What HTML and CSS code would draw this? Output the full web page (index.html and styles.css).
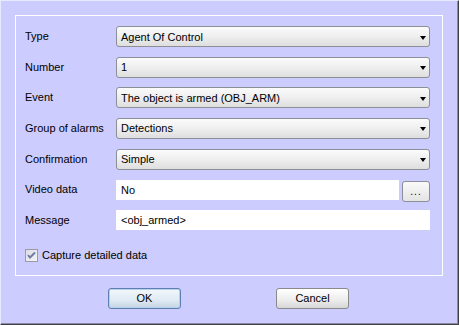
FILE: index.html
```html
<!DOCTYPE html>
<html>
<head>
<meta charset="utf-8">
<link rel="stylesheet" href="styles.css">
</head>
<body>
<div class="window">
  <div class="inner">
    <div class="group">
      <div class="form">
        <div class="label">Type</div>
        <div class="combo"><span>Agent Of Control</span><i class="arrow"></i></div>
        <div class="label">Number</div>
        <div class="combo"><span>1</span><i class="arrow"></i></div>
        <div class="label">Event</div>
        <div class="combo"><span>The object is armed (OBJ_ARM)</span><i class="arrow"></i></div>
        <div class="label">Group of alarms</div>
        <div class="combo"><span>Detections</span><i class="arrow"></i></div>
        <div class="label">Confirmation</div>
        <div class="combo"><span>Simple</span><i class="arrow"></i></div>
        <div class="label">Video data</div>
        <div class="video">
          <div class="field">No</div>
          <div class="dots">...</div>
        </div>
        <div class="label">Message</div>
        <div class="field">&lt;obj_armed&gt;</div>
      </div>
      <div class="check-row">
        <span class="checkbox">
          <svg width="13" height="13" viewBox="0 0 13 13"><path d="M3 6 L5 8.5 L10 3.5" fill="none" stroke="#6f7ca4" stroke-width="2"/></svg>
        </span>
        <span>Capture detailed data</span>
      </div>
    </div>
    <div class="buttons">
      <div class="btn ok">OK</div>
      <div class="btn">Cancel</div>
    </div>
  </div>
</div>
</body>
</html>
```
FILE: styles.css
```css
html, body {
  margin: 0;
  padding: 0;
}
body {
  width: 459px;
  height: 325px;
  overflow: hidden;
  font-family: "Liberation Sans", Arial, sans-serif;
  font-size: 11px;
  color: #000;
}
.window {
  width: 459px;
  height: 325px;
  box-sizing: border-box;
  background: #ccccff;
  border-top: 1px solid #e8e8ff;
  border-left: 1px solid #e8e8ff;
  border-right: 1px solid #404040;
  border-bottom: 1px solid #404040;
}
.inner {
  height: 100%;
  box-sizing: border-box;
  border-right: 1px solid #8a8aa8;
  border-bottom: 1px solid #8a8aa8;
  padding: 14px 14px 0 14px;
}
.group {
  border: 1px solid #ffffff;
  height: 261px;
  box-sizing: border-box;
  padding: 10px 12px 0 9px;
}
.form {
  display: grid;
  grid-template-columns: 91px 314px;
  grid-auto-rows: 21px;
  row-gap: 9.67px;
  align-items: center;
}
.label {
  line-height: 21px;
}
.combo {
  height: 21px;
  box-sizing: border-box;
  border: 1px solid #8c8f96;
  border-radius: 3px;
  background: linear-gradient(#fbfbfb, #f0f0f0 45%, #dedede);
  display: flex;
  align-items: center;
  padding: 0 3px 0 4px;
  justify-content: space-between;
}
.arrow {
  width: 0;
  height: 0;
  border-left: 3.5px solid transparent;
  border-right: 3.5px solid transparent;
  border-top: 4px solid #000;
  margin-top: 2px;
}
.video {
  display: flex;
  align-items: center;
  gap: 3px;
}
.video .field {
  flex: 1;
}
.field {
  height: 20px;
  line-height: 20px;
  background: #ffffff;
  padding-left: 5px;
  box-sizing: border-box;
}
.dots {
  width: 28px;
  height: 21px;
  box-sizing: border-box;
  border: 1px solid #8c8f96;
  border-radius: 3px;
  background: linear-gradient(#fafafa, #e4e4e4);
  text-align: center;
  line-height: 20px;
  font-size: 10px;
  letter-spacing: 1px;
  margin-top: 3px;
}
.check-row {
  display: flex;
  align-items: center;
  gap: 4px;
  margin-top: 18px;
}
.checkbox {
  width: 13px;
  height: 13px;
  box-sizing: border-box;
  border: 1px solid #9a9aa8;
  background: linear-gradient(135deg, #dcdce4, #f4f4f8);
  display: flex;
  align-items: center;
  justify-content: center;
}
.checkbox svg {
  display: block;
  margin: -1px;
}
.buttons {
  display: flex;
  justify-content: center;
  gap: 95px;
  margin-top: 12px;
  padding-right: 1px;
}
.btn {
  width: 73px;
  height: 21px;
  box-sizing: border-box;
  border: 1px solid #8a8a8a;
  border-radius: 3px;
  background: linear-gradient(#ffffff, #ececec 60%, #d6d6d6);
  text-align: center;
  line-height: 19px;
}
.btn.ok {
  border-color: #5d7fb1;
  background: linear-gradient(#f2f8fc, #dfeaf3 60%, #c4d4e4);
  box-shadow: inset 0 0 0 1px #b8d0ec;
}
```
